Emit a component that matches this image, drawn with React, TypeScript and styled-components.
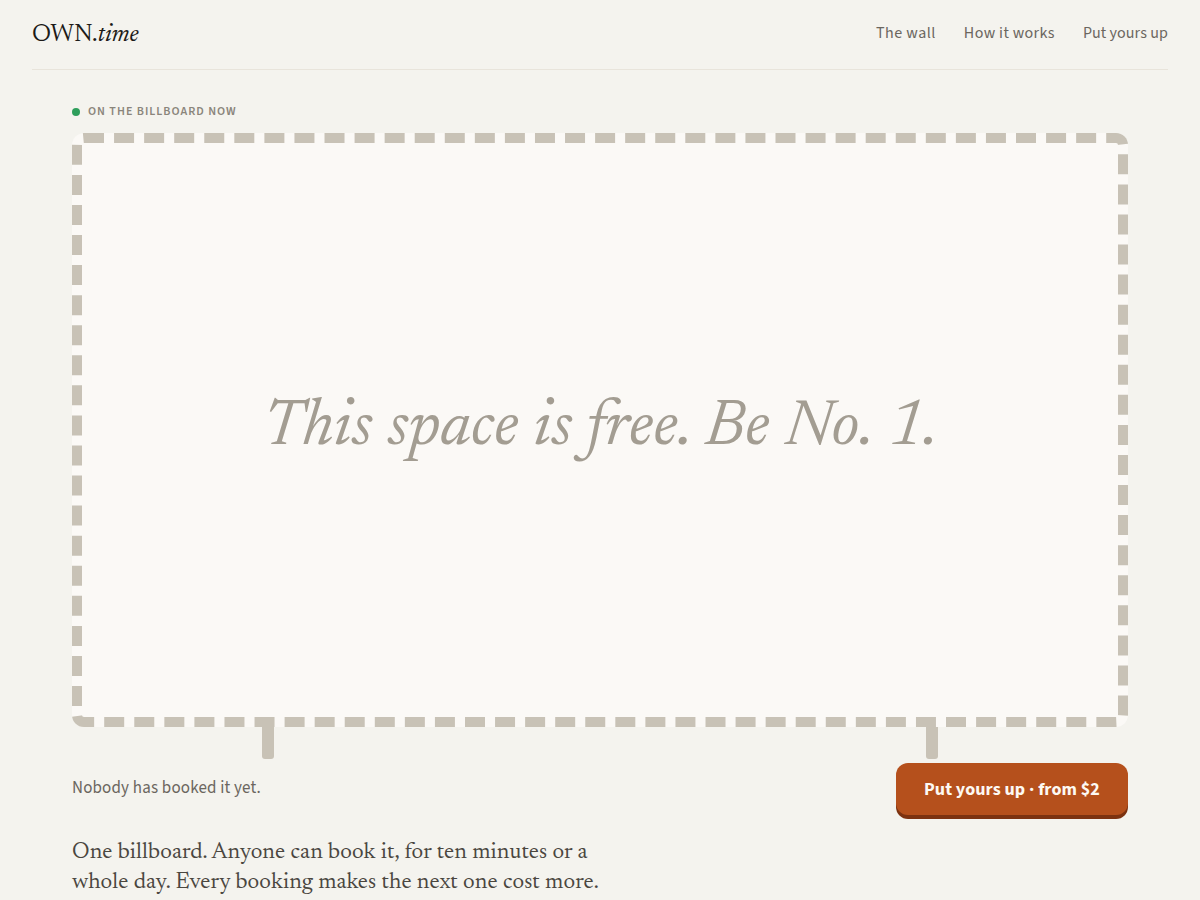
import styled, { createGlobalStyle } from "styled-components";

const serif = `"Newsreader", "Liberation Serif", serif`;
const sans = `"Source Sans 3", "Noto Sans", sans-serif`;

const Global = createGlobalStyle`
  html, body { margin: 0; padding: 0; background: #f4f3ee; }
  body { font-family: ${sans}; color: #1c1a17; font-optical-sizing: none; }
  a { text-decoration: none; color: inherit; }
`;

const Page = styled.div`
  height: 900px;
  overflow: hidden;
  padding: 0 32px;
`;

const Header = styled.header`
  display: flex;
  justify-content: space-between;
  align-items: center;
  height: 69px;
  border-bottom: 1px solid #e8e4db;
`;

const Logo = styled.div`
  padding-top: 2px;
  font-family: ${serif};
  font-size: 25px;
  line-height: 1;
  letter-spacing: -0.03px;
  color: #1c1a17;
  em { font-style: italic; }
`;

const Nav = styled.nav`
  display: flex;
  gap: 28px;
  padding-bottom: 3px;
`;

const NavLink = styled.a<{ $track: number }>`
  font-size: 16px;
  line-height: 20px;
  letter-spacing: ${(p) => p.$track}px;
  color: #6b665e;
`;

const Main = styled.main`
  padding: 32px 40px 0;
`;

const Status = styled.div`
  display: flex;
  align-items: center;
  gap: 8px;
  height: 20px;
`;

const StatusLabel = styled.span`
  margin-bottom: 2px;
  font-size: 12px;
  font-weight: 600;
  letter-spacing: 1px;
  color: #8a857b;
`;

const Dot = styled.span`
  width: 8px;
  height: 8px;
  border-radius: 50%;
  background: #2e9e5b;
`;

const Billboard = styled.div`
  box-sizing: border-box;
  margin-top: 11px;
  width: 100%;
  aspect-ratio: 16 / 9;
  display: flex;
  align-items: center;
  justify-content: center;
  background: #fbf9f6;
  border: 10px dashed #c8c2b6;
  border-radius: 12px;
`;

const Free = styled.div`
  padding-bottom: 4px;
  font-family: ${serif};
  font-style: italic;
  font-size: 66px;
  color: #a39d92;
`;

const Legs = styled.div`
  display: flex;
  justify-content: space-between;
  padding: 0 190px;
`;

const Leg = styled.div`
  width: 12px;
  height: 32px;
  background: #c8c2b6;
  border-radius: 0 0 3px 3px;
`;

const Row = styled.div`
  display: flex;
  justify-content: space-between;
  align-items: flex-start;
  margin-top: 4px;
`;

const Note = styled.p`
  margin: 13px 0 0;
  font-size: 17px;
  line-height: 24px;
  letter-spacing: 0.17px;
  color: #6b665e;
`;

const Cta = styled.button`
  width: 232px;
  height: 52px;
  padding: 0;
  border: 0;
  border-radius: 12px;
  background: #b5501c;
  box-shadow: 0 4px 0 #7c3210;
  font-family: ${sans};
  font-size: 18px;
  font-weight: 700;
  letter-spacing: 0.1px;
  color: #fdf9f3;
`;

const Pitch = styled.p`
  margin: 23px 0 0;
  max-width: 540px;
  font-family: ${serif};
  font-size: 23px;
  line-height: 30px;
  letter-spacing: 0.1px;
  color: #4a463f;
`;

export default function App() {
  return (
    <Page>
      <Global />
      <Header>
        <Logo>
          OWN.<em>time</em>
        </Logo>
        <Nav>
          <NavLink href="#wall" $track={0.5}>The wall</NavLink>
          <NavLink href="#how" $track={0.37}>How it works</NavLink>
          <NavLink href="#book" $track={0.08}>Put yours up</NavLink>
        </Nav>
      </Header>
      <Main>
        <Status>
          <Dot />
          <StatusLabel>ON THE BILLBOARD NOW</StatusLabel>
        </Status>
        <Billboard>
          <Free>This space is free. Be No. 1.</Free>
        </Billboard>
        <Legs>
          <Leg />
          <Leg />
        </Legs>
        <Row>
          <Note>Nobody has booked it yet.</Note>
          <Cta>Put yours up · from $2</Cta>
        </Row>
        <Pitch>
          One billboard. Anyone can book it, for ten minutes or a whole day. Every booking makes the
          next one cost more.
        </Pitch>
      </Main>
    </Page>
  );
}
